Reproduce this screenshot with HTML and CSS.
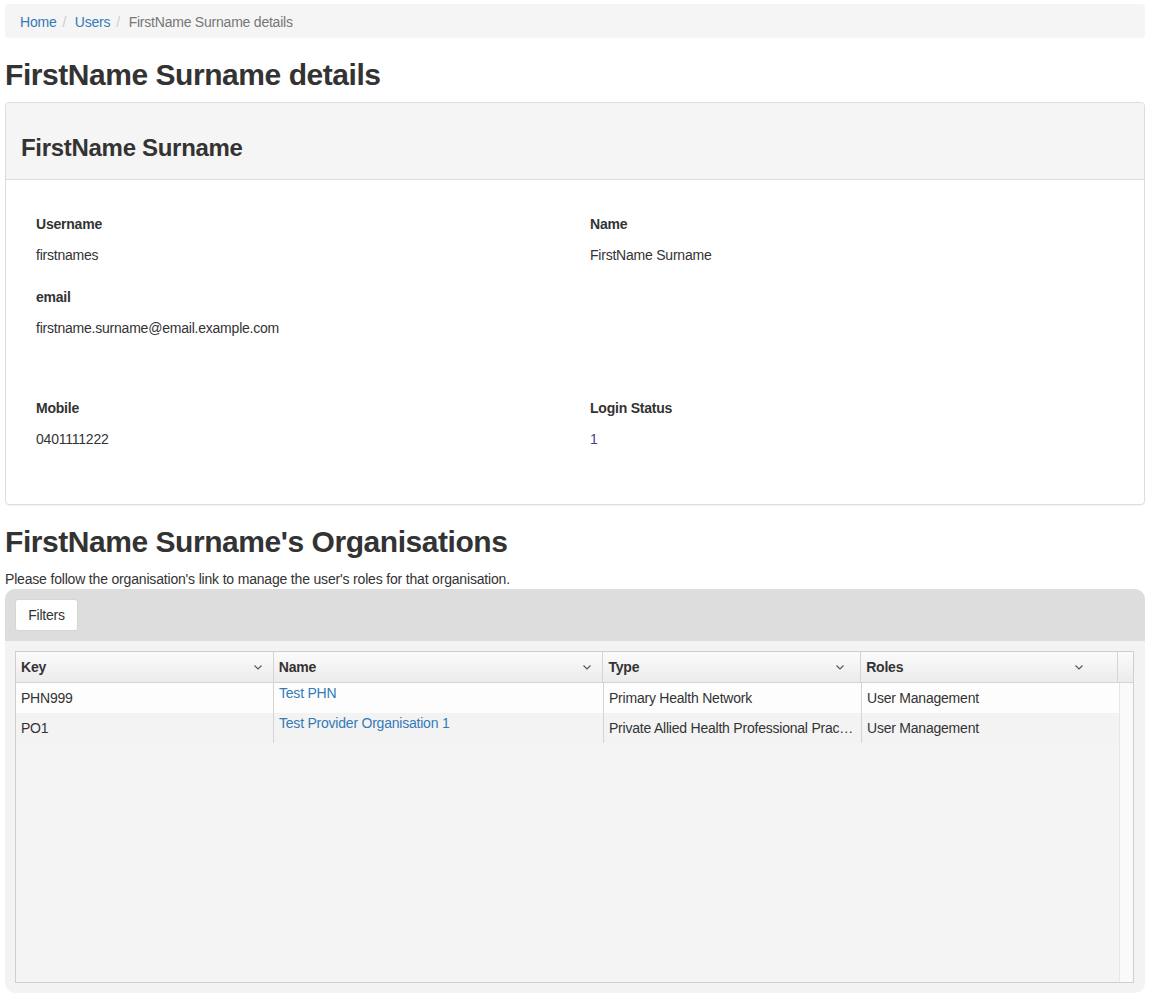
FILE: index.html
```html
<!DOCTYPE html>
<html>
<head>
<meta charset="utf-8">
<title>FirstName Surname details</title>
<link rel="stylesheet" href="styles.css">
</head>
<body>
<div class="page">
  <ol class="breadcrumb">
    <li><a href="#">Home</a></li>
    <li><a href="#">Users</a></li>
    <li class="active">FirstName Surname details</li>
  </ol>

  <h1 class="page-title">FirstName Surname details</h1>

  <div class="panel">
    <div class="panel-heading">
      <h3 class="panel-title">FirstName Surname</h3>
    </div>
    <div class="panel-body">
      <div class="row">
        <div class="col">
          <div class="field">
            <div class="label">Username</div>
            <div class="value">firstnames</div>
          </div>
          <div class="field">
            <div class="label">email</div>
            <div class="value">firstname.surname@email.example.com</div>
          </div>
        </div>
        <div class="col">
          <div class="field">
            <div class="label">Name</div>
            <div class="value">FirstName Surname</div>
          </div>
        </div>
      </div>
      <div class="row">
        <div class="col">
          <div class="field">
            <div class="label">Mobile</div>
            <div class="value">0401111222</div>
          </div>
        </div>
        <div class="col">
          <div class="field">
            <div class="label">Login Status</div>
            <div class="value status">1</div>
          </div>
        </div>
      </div>
    </div>
  </div>

  <h1 class="page-title">FirstName Surname's Organisations</h1>
  <p class="intro">Please follow the organisation's link to manage the user's roles for that organisation.</p>

  <div class="grid-wrap">
    <div class="toolbar">
      <button class="btn" type="button">Filters</button>
    </div>
    <div class="grid-area">
      <div class="grid">
        <div class="grid-header">
          <div class="hcell c-key"><span>Key</span><svg class="chev" viewBox="0 0 8 5" width="8" height="5"><polyline points="0.5,0.5 4,4 7.5,0.5"/></svg></div>
          <div class="hcell c-name"><span>Name</span><svg class="chev" viewBox="0 0 8 5" width="8" height="5"><polyline points="0.5,0.5 4,4 7.5,0.5"/></svg></div>
          <div class="hcell c-type"><span>Type</span><svg class="chev" viewBox="0 0 8 5" width="8" height="5"><polyline points="0.5,0.5 4,4 7.5,0.5"/></svg></div>
          <div class="hcell c-roles"><span>Roles</span><svg class="chev" viewBox="0 0 8 5" width="8" height="5"><polyline points="0.5,0.5 4,4 7.5,0.5"/></svg></div>
          <div class="hcell c-scroll"></div>
        </div>
        <div class="grid-body">
          <div class="rows">
            <div class="grow odd">
              <div class="cell c-key">PHN999</div>
              <div class="cell c-name link"><a href="#">Test PHN</a></div>
              <div class="cell c-type">Primary Health Network</div>
              <div class="cell c-roles">User Management</div>
            </div>
            <div class="grow even">
              <div class="cell c-key">PO1</div>
              <div class="cell c-name link"><a href="#">Test Provider Organisation 1</a></div>
              <div class="cell c-type">Private Allied Health Professional Practice</div>
              <div class="cell c-roles">User Management</div>
            </div>
          </div>
          <div class="scroll-col"></div>
        </div>
      </div>
    </div>
  </div>
</div>
</body>
</html>
```

FILE: styles.css
```css
* { box-sizing: border-box; }

html, body {
  margin: 0;
  padding: 0;
  background: #fff;
}

body {
  font-family: "Liberation Sans", Arial, Helvetica, sans-serif;
  font-size: 14px;
  line-height: 20px;
  letter-spacing: -0.22px;
  color: #333;
}

a { color: #337ab7; text-decoration: none; }

.page {
  padding: 4px 6px 0 5px;
}

/* breadcrumb */
.breadcrumb {
  list-style: none;
  margin: 0;
  padding: 9px 15px 7px;
  line-height: 18px;
  background: #f5f5f5;
  border-radius: 4px;
  display: flex;
}
.breadcrumb li + li::before {
  content: "/\00a0";
  padding: 0 5px 0 6px;
  color: #ccc;
}
.breadcrumb .active { color: #777; }

/* headings */
.page-title {
  font-size: 30px;
  line-height: 33px;
  font-weight: bold;
  letter-spacing: -0.45px;
  margin: 20px 0 11px;
  color: #333;
}

/* panel */
.panel {
  border: 1px solid #ddd;
  border-radius: 4px;
  margin-bottom: 20px;
  box-shadow: 0 1px 1px rgba(0,0,0,0.05);
}
.panel-heading {
  background: #f5f5f5;
  border-bottom: 1px solid #ddd;
  border-radius: 3px 3px 0 0;
  padding: 32px 15px 18px;
}
.panel-title {
  margin: 0;
  font-size: 24px;
  line-height: 26px;
  font-weight: bold;
  letter-spacing: -0.3px;
  color: #333;
}
.panel-body {
  padding: 34px 15px 55px;
  display: flex;
  flex-direction: column;
  gap: 60px;
}
.row {
  display: grid;
  grid-template-columns: 1fr 1fr;
}
.col {
  padding: 0 15px;
  display: flex;
  flex-direction: column;
  gap: 22px;
}
.label {
  font-weight: bold;
  margin-bottom: 11px;
}
.value.status { color: #4b3f91; }

/* organisations */
.intro {
  margin: 0;
  font-size: 14px;
  line-height: 20px;
  letter-spacing: -0.18px;
}

.grid-wrap {
  border-radius: 10px;
  overflow: hidden;
  background: #f3f3f3;
}
.toolbar {
  background: #dddddd;
  padding: 10px;
  height: 52px;
}
.btn {
  font-family: inherit;
  font-size: 14px;
  line-height: 20px;
  letter-spacing: -0.22px;
  color: #333;
  background: #fff;
  border: 1px solid #d6d6d6;
  border-radius: 3px;
  padding: 0 12px;
  width: 63px;
  height: 32px;
  margin: 0;
}
.grid-area {
  padding: 10px 11px 10px 10px;
}
.grid {
  border: 1px solid #cfcfcf;
  height: 332px;
  display: flex;
  flex-direction: column;
  background: #f4f4f4;
}
.grid-header {
  display: flex;
  height: 31px;
  border-bottom: 1px solid #d4d4d4;
  background: linear-gradient(#fbfbfb, #ececec);
}
.c-key { width: 258px; }
.c-name { width: 330px; }
.c-type { width: 258px; }
.c-roles { width: 257px; }
.c-scroll { width: 15px; }

.hcell {
  display: flex;
  align-items: center;
  justify-content: space-between;
  padding: 0 11px 0 5px;
  font-weight: bold;
  border-right: 1px solid #d4d4d4;
}
.hcell.c-type { padding-right: 16px; }
.hcell.c-roles { padding-right: 34px; }
.hcell.c-scroll { border-right: none; padding: 0; }
.chev {
  fill: none;
  stroke: #555;
  stroke-width: 1.1;
}

.grid-body {
  flex: 1;
  display: flex;
}
.rows {
  flex: 1;
}
.grow {
  display: flex;
  height: 30px;
}
.grow.odd { background: #fdfdfd; }
.grow.even { background: #f3f3f3; }
.cell {
  padding: 0 5px;
  line-height: 30px;
  border-right: 1px solid #d4d4d4;
  white-space: nowrap;
  overflow: hidden;
  text-overflow: ellipsis;
}
.cell.c-roles { border-right: none; }
.cell.link { line-height: 20px; }
.scroll-col {
  width: 16px;
  background: #fafafa;
  border-left: 1px solid #e6e6e6;
}
```
